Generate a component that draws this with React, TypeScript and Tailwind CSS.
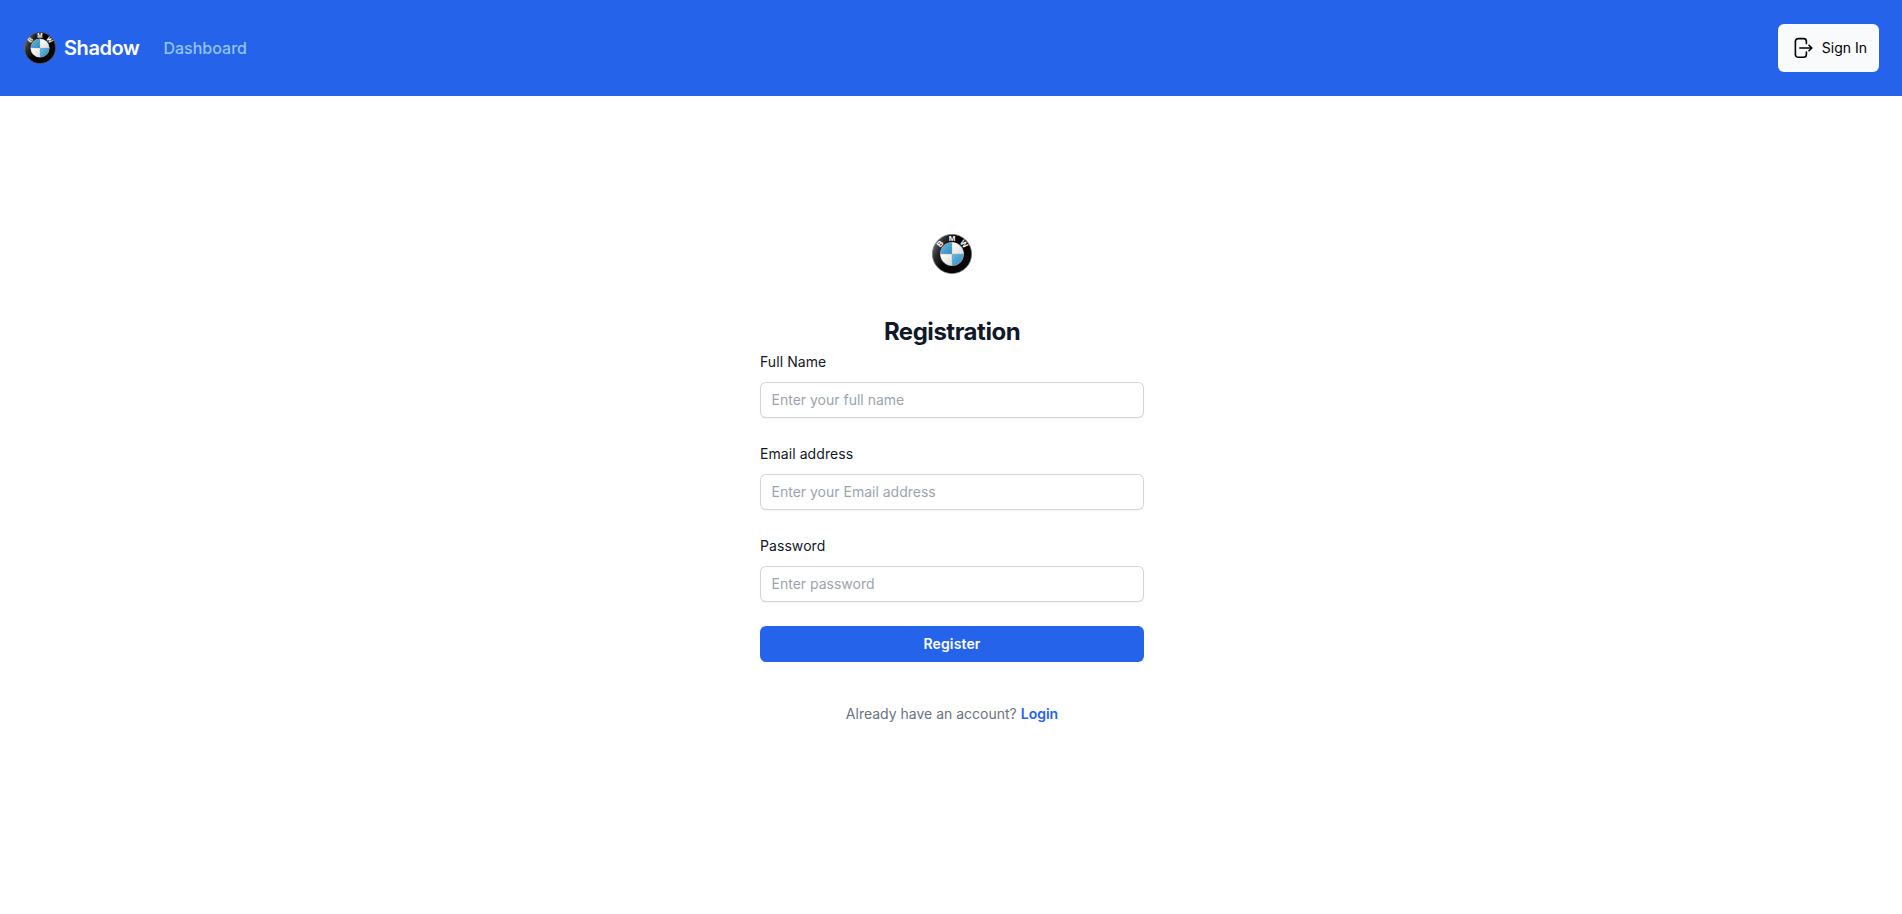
function Roundel({ className }: { className: string }) {
  return (
    <svg viewBox="0 0 40 40" className={className} role="img" aria-label="BMW">
      <defs>
        <linearGradient id="ring" x1="0" y1="0.1" x2="1" y2="0.6">
          <stop offset="0" stopColor="#8a8a8a" />
          <stop offset="0.25" stopColor="#2c2c2c" />
          <stop offset="0.5" stopColor="#000" />
          <stop offset="1" stopColor="#0a0a0a" />
        </linearGradient>
        <linearGradient id="sky" x1="0" y1="0" x2="1" y2="1">
          <stop offset="0" stopColor="#6bb8df" />
          <stop offset="1" stopColor="#2b8cc4" />
        </linearGradient>
        <linearGradient id="silver" x1="0" y1="0" x2="1" y2="1">
          <stop offset="0" stopColor="#ffffff" />
          <stop offset="1" stopColor="#dcdcdc" />
        </linearGradient>
      </defs>
      <circle cx="20" cy="20" r="19.6" fill="url(#ring)" stroke="#707070" strokeWidth="0.7" />
      <circle cx="20" cy="20" r="12" fill="#a5a5a5" />
      <path d="M20 20V8.6A11.4 11.4 0 0 0 8.6 20Z" fill="url(#sky)" />
      <path d="M20 20V8.6A11.4 11.4 0 0 1 31.4 20Z" fill="url(#silver)" />
      <path d="M20 20H31.4A11.4 11.4 0 0 1 20 31.4Z" fill="url(#sky)" />
      <path d="M20 20H8.6A11.4 11.4 0 0 0 20 31.4Z" fill="url(#silver)" />
      <path d="M20 8V32M8 20H32" stroke="#aaa" strokeWidth="0.4" />
      <g fill="#ffffff" fontSize="8" fontWeight="700" textAnchor="middle" fontFamily="Liberation Sans, sans-serif">
        <text transform="translate(20 20) rotate(-50)" y="-13">B</text>
        <text x="20" y="7.2">M</text>
        <text transform="translate(20 20) rotate(50)" y="-13">W</text>
      </g>
    </svg>
  );
}

function SignInIcon() {
  return (
    <svg viewBox="0 0 24 24" className="size-6" fill="none" stroke="currentColor" strokeWidth="1.6" strokeLinecap="round" strokeLinejoin="round">
      <path d="M15.4 7.6V5.4A2.8 2.8 0 0 0 12.6 2.6H7.2A2.8 2.8 0 0 0 4.4 5.4V18.5A2.8 2.8 0 0 0 7.2 21.3H12.6A2.8 2.8 0 0 0 15.4 18.5V16" />
      <path d="M8.8 12H20.6M18 9.2L20.8 12L18 14.8" />
    </svg>
  );
}

function Field({ label, id, type, placeholder }: { label: string; id: string; type: string; placeholder: string }) {
  return (
    <div>
      <label htmlFor={id} className="block text-sm leading-6 tracking-[0.005em] text-[#111827]">{label}</label>
      <input
        id={id}
        type={type}
        placeholder={placeholder}
        className="mt-2 block h-9 w-full rounded-md bg-white px-[11.5px] pb-px text-sm leading-6 text-[#111827] shadow-xs ring-1 ring-[#d1d5db] ring-inset placeholder:text-[#9ca3af]"
      />
    </div>
  );
}

export default function App() {
  return (
    <div className="min-h-screen bg-white font-['Inter',sans-serif]">
      <nav className="flex h-24 items-center justify-between bg-[#2563eb] pr-[23px] pl-6">
        <div className="flex items-center">
          <Roundel className="size-8" />
          <span className="ml-2 text-xl font-semibold tracking-[-0.02em] text-white">Shadow</span>
          <a href="#" className="ml-6 text-base font-medium text-[#93c5fd]">Dashboard</a>
        </div>
        <button type="button" className="flex h-12 items-center gap-[7px] rounded-md bg-[#f9fafb] pr-3 pl-[13px] text-sm text-black">
          <SignInIcon />
          Sign In
        </button>
      </nav>
      <main className="flex justify-center pt-[138px] pl-0.5">
        <div className="flex w-96 flex-col">
          <Roundel className="size-10 self-center" />
          <h2 className="mt-10 text-center text-2xl leading-9 font-bold tracking-[-0.02em] text-[#111827]">Registration</h2>
          <form className="flex flex-col gap-6">
            <Field label="Full Name" id="name" type="text" placeholder="Enter your full name" />
            <Field label="Email address" id="email" type="email" placeholder="Enter your Email address" />
            <Field label="Password" id="password" type="password" placeholder="Enter password" />
            <button type="button" className="h-9 w-full rounded-md bg-[#2563eb] text-sm leading-6 font-semibold tracking-[0.01em] text-white">Register</button>
          </form>
          <p className="mt-10 text-center text-sm leading-6 text-[#6b7280]">
            Already have an account? <a href="#" className="font-semibold text-[#2563eb]">Login</a>
          </p>
        </div>
      </main>
    </div>
  );
}
